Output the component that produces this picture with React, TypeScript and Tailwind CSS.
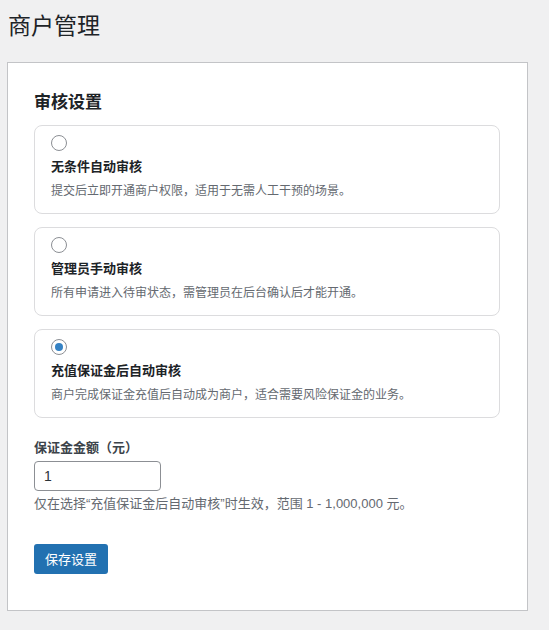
import React from "react";

const font = { fontFamily: '"Noto Sans CJK SC", "Noto Sans", sans-serif' };
const latinFirst = { fontFamily: '"Liberation Sans", "Noto Sans CJK SC", sans-serif' };

const options = [
  { title: "无条件自动审核", desc: "提交后立即开通商户权限，适用于无需人工干预的场景。", checked: false },
  { title: "管理员手动审核", desc: "所有申请进入待审状态，需管理员在后台确认后才能开通。", checked: false },
  { title: "充值保证金后自动审核", desc: "商户完成保证金充值后自动成为商户，适合需要风险保证金的业务。", checked: true },
];

function Radio({ checked }: { checked: boolean }) {
  return (
    <span className="flex h-[16px] w-[16px] items-center justify-center rounded-full border border-[#8c8f94] bg-white">
      {checked && <span className="h-[8px] w-[8px] rounded-full bg-[#3582c4]" />}
    </span>
  );
}

export default function App() {
  return (
    <div className="min-h-[630px] bg-[#f0f0f1] text-[#1d2327]" style={font}>
      <h1 className="pl-[8px] pt-[9px] text-[23px] leading-[30px] font-normal text-[#1d2327]">商户管理</h1>
      <div className="ml-[7px] mt-[23px] w-[521px] border border-[#c3c4c7] bg-white px-[26px] pt-[26px] pb-[36px]">
        <h2 className="text-[17px] leading-[24px] font-bold text-[#1d2327]">审核设置</h2>
        <div className="mt-[12px] flex flex-col gap-[13px]">
          {options.map((o) => (
            <div key={o.title} className="h-[89px] w-[466px] rounded-[8px] border border-[#dcdcde] bg-white px-[16px] pt-[9px]">
              <Radio checked={o.checked} />
              <div className="mt-[5px] text-[13px] leading-[20px] font-bold text-[#1d2327]">{o.title}</div>
              <div className="mt-[5px] text-[12px] leading-[18px] text-[#646970]">{o.desc}</div>
            </div>
          ))}
        </div>
        <div className="mt-[19px] text-[13px] leading-[20px] font-bold text-[#3c434a]">保证金金额（元）</div>
        <div className="mt-[4px] flex h-[30px] w-[127px] items-center rounded-[4px] border border-[#8c8f94] px-[9px] text-[14px] text-[#2c3338]" style={latinFirst}>1</div>
        <div className="mt-[3px] text-[13px] leading-[20px] text-[#646970]" style={latinFirst}>仅在选择“充值保证金后自动审核”时生效，范围 1 - 1,000,000 元。</div>
        <button className="mt-[30px] flex h-[30px] items-center rounded-[3px] bg-[#2271b1] px-[11px] text-[13px] text-white">保存设置</button>
      </div>
    </div>
  );
}
